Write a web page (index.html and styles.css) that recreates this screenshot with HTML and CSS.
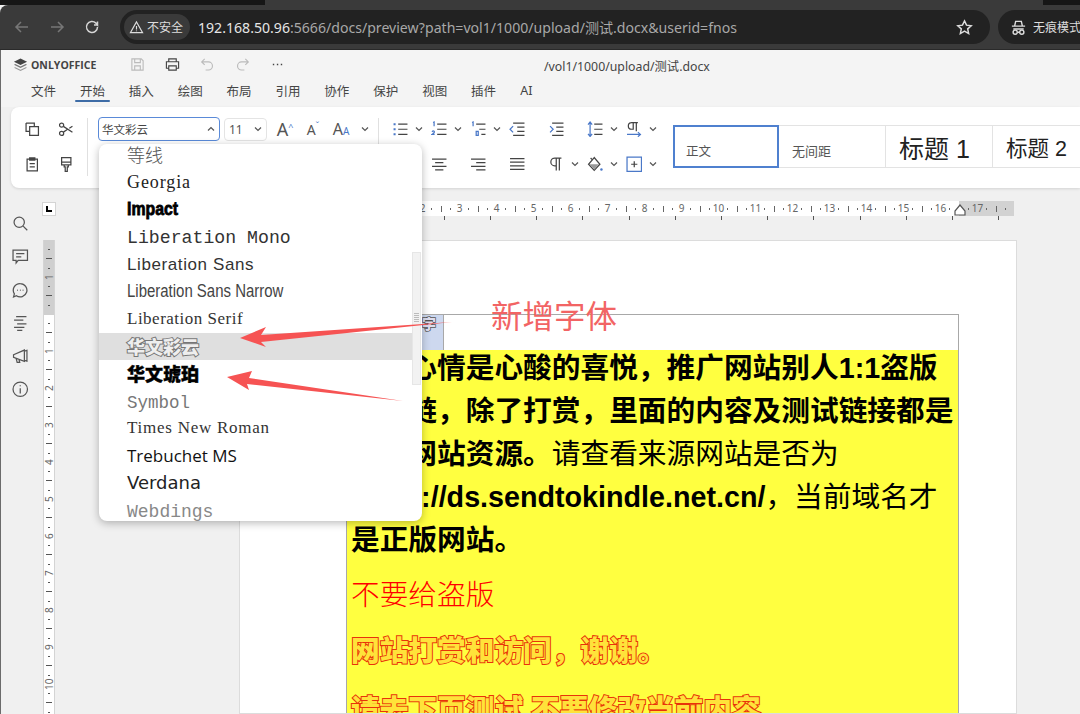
FILE: index.html
```html
<!DOCTYPE html>
<html>
<head>
<meta charset="utf-8">
<title>ONLYOFFICE</title>
<link rel="stylesheet" href="styles.css">
</head>
<body>
<!-- browser bar -->
<div class="tabstrip"><div class="tabshape"></div></div>
<div class="browser">
	<svg class="navicon dim" viewBox="0 0 16 16"><path d="M14 8H2M7 3 2 8l5 5"/></svg>
	<svg class="navicon dim" viewBox="0 0 16 16"><path d="M2 8h12M9 3l5 5-5 5"/></svg>
	<svg class="navicon" viewBox="0 0 16 16"><path d="M13.5 8a5.5 5.5 0 1 1-1.6-3.9L13.5 6V2.500M13.500 6H10"/></svg>
	<div class="urlbar">
		<div class="chip">
			<svg class="warn" viewBox="0 0 16 16"><path d="M8 2 1.500 13.500h13zM8 6.500v3.500M8 11.300v.7"/></svg>
			<span>不安全</span>
		</div>
		<div class="url"><b>192.168.50.96</b>:5666/docs/preview?path=vol1/1000/upload/测试.docx&amp;userid=fnos</div>
		<svg class="star" viewBox="0 0 16 16"><path d="m8 1.800 1.900 4 4.400.5-3.300 3 .9 4.400L8 11.500l-3.900 2.200.9-4.400-3.300-3 4.400-.5z"/></svg>
	</div>
	<div class="incognito">
		<svg class="spy" viewBox="0 0 18 18"><path d="M5 7l1-4.500h6L13 7M2 7.500h14M3.500 10.500h11"/><circle cx="5.500" cy="14" r="2.200"/><circle cx="12.500" cy="14" r="2.200"/><path d="M7.700 14h2.600"/></svg>
		<span>无痕模式</span>
	</div>
</div>

<div class="app">
	<!-- title row and menu -->
	<div class="apphead">
		<div class="titlerow">
			<div class="logo">
				<svg viewBox="0 0 16 16"><path class="lg1" d="M8 1.500 15 5 8 8.500 1 5z"/><path class="lg2" d="M2.500 7.500 1 8.300l7 3.500 7-3.500-1.500-.8L8 10.200z"/><path class="lg3" d="M2.500 10.800 1 11.500 8 15l7-3.500-1.500-.7L8 13.500z"/></svg>
				<span>ONLYOFFICE</span>
			</div>
			<div class="quick">
				<svg class="qicon faint" viewBox="0 0 16 16"><path d="M2 2h10l2 2v10H2zM5 2v4h6V2M5 14V9.500h6V14"/></svg>
				<svg class="qicon" viewBox="0 0 16 16"><path d="M4 5V2h8v3M4 12H1.500V5h13v7H12M4 9.500h8V14H4z"/></svg>
				<svg class="qicon faint" viewBox="0 0 16 16"><path d="M5 2 1.800 5.200 5 8.400M2 5.200h7a4.300 4.300 0 0 1 0 8.600H6"/></svg>
				<svg class="qicon faint" viewBox="0 0 16 16"><path d="M11 2l3.200 3.200L11 8.400M14 5.200H7a4.300 4.300 0 0 0 0 8.600h3"/></svg>
				<svg class="qicon" viewBox="0 0 16 16"><path class="dots" d="M3 8h1.500M7.300 8h1.500M11.500 8H13"/></svg>
			</div>
			<div class="filename">/vol1/1000/upload/测试.docx</div>
		</div>
		<div class="menu">
			<span>文件</span><span class="active">开始</span><span>插入</span><span>绘图</span><span>布局</span><span>引用</span><span>协作</span><span>保护</span><span>视图</span><span>插件</span><span class="ai">AI</span>
		</div>
	</div>

	<!-- toolbar -->
	<div class="toolbar">
		<div class="clip">
			<svg class="ticon" viewBox="0 0 16 16"><path d="M2 2h8v3M5.500 5.500H14V14H5.500zM2 2v8h3.500"/></svg>
			<svg class="ticon" viewBox="0 0 16 16"><circle cx="3.500" cy="4" r="2"/><circle cx="3.500" cy="12" r="2"/><path d="M5.200 5.200 14 11M5.200 10.800 9 8.300M11 7l3-2"/></svg>
			<svg class="ticon" viewBox="0 0 16 16"><path d="M3 3h10v11.500H3zM5.500 1.800h5V4h-5zM5.500 7.500h5M5.500 10.500h5"/></svg>
			<svg class="ticon" viewBox="0 0 16 16"><path d="M3.500 1.500h9v7h-9zM3.500 6h9M6 8.500v2H7v4.500h2v-4.500h1v-2"/></svg>
		</div>
		<div class="sep"></div>
		<div class="fontgroup">
			<div class="fontrow">
				<div class="fontsel">
					<span>华文彩云</span>
					<svg class="chev" viewBox="0 0 8 8"><path d="M1 5.500 4 2.500l3 3"/></svg>
				</div>
				<div class="sizesel">
					<span>11</span>
					<svg class="chev" viewBox="0 0 8 8"><path d="M1 2.500l3 3 3-3"/></svg>
				</div>
				<div class="aicon up">A<i>^</i></div>
				<div class="aicon down">A<i>ˇ</i></div>
				<div class="aicon case">A<em>A</em></div>
				<svg class="chev" viewBox="0 0 8 8"><path d="M1 2.500l3 3 3-3"/></svg>
			</div>
		</div>
		<div class="sep sep-b"></div>
		<div class="paragroup">
			<svg class="ticon" viewBox="0 0 16 16"><path d="M6 3h9M6 8h9M6 13h9"/><path class="bl" d="M1.500 2.200h2v2h-2zM1.500 7h2v2h-2zM1.500 11.800h2v2h-2z"/></svg>
			<svg class="chev" viewBox="0 0 8 8"><path d="M1 2.500l3 3 3-3"/></svg>
			<svg class="ticon" viewBox="0 0 16 16"><path d="M6 3h9M6 8h9M6 13h9"/><path class="blt" d="M2 1.500 3 1v4M1 10.500q1-1.500 2-.5t-2 3h2.500"/></svg>
			<svg class="chev" viewBox="0 0 8 8"><path d="M1 2.500l3 3 3-3"/></svg>
			<svg class="ticon" viewBox="0 0 16 16"><path d="M6 3h9M9 8h6M11 13h4"/><path class="blt" d="M2 1.500 3 1v4M6 10h2v4H6z"/></svg>
			<svg class="chev" viewBox="0 0 8 8"><path d="M1 2.500l3 3 3-3"/></svg>
			<svg class="ticon" viewBox="0 0 16 16"><path d="M4 2h11M8 6h7M8 10h7M4 14h11"/><path class="blt" d="M4 5 1 8l3 3"/></svg>
			<span></span>
			<svg class="ticon" viewBox="0 0 16 16"><path d="M4 2h11M8 6h7M8 10h7M4 14h11"/><path class="blt" d="M2 5l3 3-3 3"/></svg>
			<span></span>
			<svg class="ticon" viewBox="0 0 16 16"><path d="M7 3h8M7 8h8M7 13h8"/><path class="blt" d="M3 1v14M1 3.500 3 1l2 2.500M1 12.500 3 15l2-2.500"/></svg>
			<svg class="chev" viewBox="0 0 8 8"><path d="M1 2.500l3 3 3-3"/></svg>
			<svg class="ticon" viewBox="0 0 16 16"><path d="M9 1.500H5.500a3 3 0 0 0 0 6.500H7V1.500M10 1.500V10M11.500 1.500H5"/><path class="blt" d="M1 13h13M11.500 10.800 14 13l-2.500 2.200"/></svg>
			<svg class="chev" viewBox="0 0 8 8"><path d="M1 2.500l3 3 3-3"/></svg>

			<svg class="ticon" viewBox="0 0 16 16"><path d="M1 3h14M1 6.500h9M1 10h14M1 13.500h9"/></svg>
			<span></span>
			<svg class="ticon" viewBox="0 0 16 16"><path d="M1 3h14M4 6.500h8M1 10h14M4 13.500h8"/></svg>
			<span></span>
			<svg class="ticon" viewBox="0 0 16 16"><path d="M1 3h14M6 6.500h9M1 10h14M6 13.500h9"/></svg>
			<span></span>
			<svg class="ticon" viewBox="0 0 16 16"><path d="M1 2.500h14M1 6h14M1 9.500h14M1 13h14"/></svg>
			<span></span>
			<svg class="ticon" viewBox="0 0 16 16"><path d="M10 2H6.500a3.500 3.500 0 0 0 0 7.500H8V2M11 2v12M8 9v5M13 2H6"/></svg>
			<svg class="chev" viewBox="0 0 8 8"><path d="M1 2.500l3 3 3-3"/></svg>
			<svg class="ticon" viewBox="0 0 16 16"><path d="M7 1.500 1.500 8 7 14l5.500-6zM5 3.500 3.500 2"/><path class="fillp" d="M2.500 8h9L7 13z"/><circle class="blf" cx="14" cy="13" r="1.200"/></svg>
			<svg class="chev" viewBox="0 0 8 8"><path d="M1 2.500l3 3 3-3"/></svg>
			<svg class="ticon" viewBox="0 0 16 16"><path class="blt" d="M1 1h14v14H1z"/><path d="M8 5v6M5 8h6"/></svg>
			<svg class="chev" viewBox="0 0 8 8"><path d="M1 2.500l3 3 3-3"/></svg>
		</div>
		<div class="styles">
			<div class="style current">正文</div>
			<div class="style nospace">无间距</div>
			<div class="style h1">标题 1</div>
			<div class="style h2">标题 2</div>
		</div>
	</div>

	<!-- work area -->
	<div class="work">
		<div class="rail">
			<svg class="ricon" viewBox="0 0 16 16"><circle cx="7" cy="7" r="5"/><path d="m10.800 10.800 4 4"/></svg>
			<svg class="ricon" viewBox="0 0 16 16"><path d="M1 2h14v10H6l-2 2.500V12H1zM4 5.500h8M4 8.500h5"/></svg>
			<svg class="ricon" viewBox="0 0 16 16"><path d="M8 1.500a6.500 6.500 0 1 1-3.800 11.800L1.500 14.500l.8-3A6.500 6.500 0 0 1 8 1.500z"/><path class="dots" d="M5 8h.6M7.700 8h.6M10.400 8h.6"/></svg>
			<svg class="ricon" viewBox="0 0 16 16"><path d="M4 1.500h10M2 5h9M5 8.500h9M2 12h10M5 15h5"/></svg>
			<svg class="ricon" viewBox="0 0 16 16"><path d="M1.500 6.500 12 2v11L1.500 9zM12 3l2.500-.7v10.400L12 12M4 10l1 4h2.500l-.8-3"/></svg>
			<svg class="ricon" viewBox="0 0 16 16"><circle cx="8" cy="8" r="7"/><path d="M8 7v5M8 4v1.200"/></svg>
		</div>
		<div class="vcol">
			<div class="corner"><i></i></div>
			<div class="vruler">
				<div class="vscale">
					<span></span><span>1</span><span></span><span>1</span><span>2</span><span>3</span><span>4</span><span>5</span><span>6</span><span>7</span><span>8</span><span>9</span><span>10</span><span></span>
				</div>
			</div>
		</div>
		<div class="canvas">
			<div class="hruler">
				<div class="hscale">
					<span></span><span>2</span><span>1</span><span></span><span>1</span><span>2</span><span>3</span><span>4</span><span>5</span><span>6</span><span>7</span><span>8</span><span>9</span><span>10</span><span>11</span><span>12</span><span>13</span><span>14</span><span>15</span><span>16</span><span>17</span><span></span>
				</div>
				<svg class="marker" viewBox="0 0 12 12"><path d="M6 1 1 7v4h10V7z"/></svg>
			</div>
			<div class="tabstops"></div>
			<div class="sheet">
				<div class="table">
					<div class="tablehead"><div class="shade"><span class="cloud small">字</span></div></div>
					<div class="cell">
						<p class="line"><b>这种心情是心酸的喜悦，推广网站别人1:1盗版</b></p>
						<p class="line"><b>盗版链，除了打赏，里面的内容及测试链接都是</b></p>
						<p class="line"><b>盗版网站资源。</b>请查看来源网站是否为</p>
						<p class="line"><b>https://ds.sendtokindle.net.cn/</b>，当前域名才</p>
						<p class="line"><b>是正版网站。</b></p>
						<p class="line gap red">不要给盗版</p>
						<p class="line gap cloud">网站打赏和访问，谢谢。</p>
						<p class="line gap cloud">请去下页测试,不要修改当前内容</p>
					</div>
				</div>
			</div>
		</div>
	</div>
</div>

<!-- font dropdown, opened over the page -->
<div class="dropdown">
	<div class="fontlist">
		<div class="item f-cjk">等线</div>
		<div class="item f-georgia">Georgia</div>
		<div class="item f-impact"><span>Impact</span></div>
		<div class="item f-mono">Liberation Mono</div>
		<div class="item f-sans">Liberation Sans</div>
		<div class="item f-narrow"><span>Liberation Sans Narrow</span></div>
		<div class="item f-serif">Liberation Serif</div>
		<div class="item selected"><span class="cloudgray">华文彩云</span></div>
		<div class="item f-amber">华文琥珀</div>
		<div class="item f-symbol">Symbol</div>
		<div class="item f-times">Times New Roman</div>
		<div class="item f-treb">Trebuchet MS</div>
		<div class="item f-verdana">Verdana</div>
		<div class="item f-web">Webdings</div>
	</div>
	<div class="scrollbar"><div class="grip"></div></div>
</div>

<!-- red annotations on the screenshot -->
<svg class="arrows" viewBox="0 0 1080 714">
	<path d="M240 338 266 327 261 335 452 322 261 342 266 347z"/>
	<path d="M227 377 252 371 249 378 403 401 247 384 249 390z"/>
</svg>
<div class="note">新增字体</div>
</body>
</html>
```

FILE: styles.css
```css
*{
	box-sizing: border-box;
}
html, body{
	margin: 0;
	height: 100%;
}
body{
	width: 1080px;
	height: 714px;
	overflow: hidden;
	position: relative;
	background: #f0f0f0;
	font-family: "Noto Sans", "Liberation Sans", "Noto Sans CJK SC", sans-serif;
}
svg{
	display: block;
	fill: none;
	stroke-width: 1.2;
}

/* browser */
.tabstrip{
	height: 5px;
	background: #161616;
	padding-left: 265px;
}
.tabshape{
	width: 778px;
	height: 5px;
	background: #3a3a3a;
}
.browser{
	height: 45px;
	background: #3a3a3a;
	border-radius: 8px 0 0 0;
	display: flex;
	align-items: center;
	padding: 0 0 0 14px;
	gap: 19px;
	border-bottom: 1px solid #2a2a2a;
}
.navicon{
	width: 16px;
	height: 16px;
	stroke: #d6d6d6;
	stroke-width: 1.5;
	flex: none;
}
.navicon.dim{
	stroke: #777;
}
.urlbar{
	width: 870px;
	height: 34px;
	margin-left: 1px;
	border-radius: 17px;
	background: #222;
	display: flex;
	align-items: center;
	padding: 0 17px 0 4px;
	flex: none;
}
.chip{
	width: 66px;
	height: 26px;
	border-radius: 13px;
	background: #3a3a3a;
	display: flex;
	align-items: center;
	gap: 3px;
	padding-left: 5px;
	color: #ddd;
	font-size: 12px;
	flex: none;
}
.warn{
	width: 15px;
	height: 15px;
	stroke: #ddd;
}
.url{
	margin-left: 8px;
	font-size: 14.100px;
	color: #a8a8a8;
	white-space: nowrap;
	flex: 1;
}
.url b{
	font-weight: 400;
	color: #e6e6e6;
}
.star{
	width: 17px;
	height: 17px;
	stroke: #ddd;
	stroke-width: 1.4;
	flex: none;
}
.incognito{
	margin-left: -11px;
	flex: 1;
	height: 34px;
	background: #222;
	border-radius: 17px 0 0 17px;
	display: flex;
	align-items: center;
	padding-left: 12px;
	gap: 6px;
	color: #ddd;
	font-size: 12px;
	white-space: nowrap;
	overflow: hidden;
}
.spy{
	width: 17px;
	height: 17px;
	stroke: #ddd;
	stroke-width: 1.5;
	flex: none;
}

/* app header */
.app{
	border-left: 1px solid #6b6b6b;
	height: 664px;
	display: flex;
	flex-direction: column;
	overflow: hidden;
}
.apphead{
	height: 57px;
	background: #f4f4f4;
	flex: none;
}
.titlerow{
	height: 29px;
	display: flex;
	align-items: center;
	padding-left: 12px;
}
.logo{
	width: 117px;
	display: flex;
	align-items: center;
	gap: 3px;
	font-size: 10.5px;
	font-weight: 700;
	color: #444;
	font-family: "Open Sans", "Liberation Sans", sans-serif;
}
.logo svg{
	width: 15px;
	height: 15px;
}
.lg1{
	fill: #444;
}
.lg2{
	fill: #777;
}
.lg3{
	fill: #999;
}
.quick{
	width: 166px;
	display: flex;
	gap: 20px;
}
.qicon{
	width: 15px;
	height: 15px;
	stroke: #444;
	flex: none;
}
.qicon.faint{
	stroke: #bbb;
}
.dots{
	stroke: #444;
	stroke-width: 1.6;
}
.filename{
	margin-left: 248px;
	margin-top: 3px;
	font-size: 12.3px;
	color: #444;
	white-space: nowrap;
}
.menu{
	display: flex;
	padding-left: 30px;
	font-size: 12.5px;
	color: #444;
	height: 23px;
	align-items: center;
}
.menu span{
	width: 25px;
	margin-right: 23.9px;
	white-space: nowrap;
	position: relative;
	text-align: center;
}
.menu .active::after{
	content: "";
	position: absolute;
	left: -5px;
	right: -5px;
	bottom: -2px;
	height: 2px;
	border-radius: 1px;
	background: #3e6ca6;
}
.menu .ai{
	margin-left: -6px;
}

/* toolbar */
.toolbar{
	height: 81px;
	margin: 0 0 0 10px;
	padding: 11px 0 0 4px;
	background: #fff;
	border-radius: 8px 0 0 8px;
	box-shadow: 0 1px 3px rgba(0,0,0,.12);
	display: flex;
	overflow: hidden;
	flex: none;
}
.clip{
	width: 68px;
	display: grid;
	grid-template-columns: 34px 34px;
	grid-template-rows: 22px 22px;
	row-gap: 13px;
	justify-items: center;
	align-items: center;
	flex: none;
}
.ticon{
	width: 16.500px;
	height: 16.500px;
	stroke: #444;
	flex: none;
}
.ticon .bl, .blf{
	fill: #4a78c8;
	stroke: none;
}
.ticon .blt{
	stroke: #4a78c8;
}
.fillp{
	fill: #999;
	stroke: none;
}
.sep{
	width: 1px;
	height: 58px;
	background: #e0e0e0;
	margin: 0 10px 0 4px;
	flex: none;
}
.sep-b{
	margin: 0 11px 0 0;
}
.fontgroup{
	width: 280px;
	flex: none;
}
.fontrow{
	display: flex;
	align-items: center;
	height: 22px;
}
.fontsel{
	width: 122px;
	height: 24px;
	margin-top: -1px;
	border: 1.5px solid #5a8ad8;
	border-radius: 4px;
	display: flex;
	align-items: center;
	justify-content: space-between;
	padding: 0 4px 0 3px;
	font-size: 11.5px;
	color: #444;
	flex: none;
}
.sizesel{
	width: 43px;
	height: 23px;
	margin-left: 4px;
	border: 1px solid #e4e4e4;
	border-radius: 4px;
	display: flex;
	align-items: center;
	justify-content: space-between;
	padding: 0 4px;
	font-size: 12px;
	color: #555;
	flex: none;
}
.chev{
	width: 8px;
	height: 8px;
	stroke: #555;
	stroke-width: 1.2;
	justify-self: center;
	align-self: center;
	flex: none;
}
.aicon{
	color: #555;
	font-size: 18px;
	width: 28px;
	text-align: center;
	white-space: nowrap;
	flex: none;
}
.aicon i{
	font-style: normal;
	font-size: 9px;
	color: #4a78c8;
	vertical-align: 6px;
}
.aicon.down{
	font-size: 14px;
}
.aicon.up{
	margin-left: 4px;
}
.aicon.case{
	width: 28px;
	margin-right: 6px;
	font-size: 16px;
}
.aicon em{
	font-style: normal;
	font-size: 10px;
	color: #4a78c8;
}
.paragroup{
	display: grid;
	grid-template-columns: repeat(14, 19.5px);
	grid-template-rows: 22px 22px;
	row-gap: 13px;
	justify-items: center;
	align-items: center;
	flex: none;
}
.styles{
	display: flex;
	height: 43px;
	margin: 7px 0 0 10px;
	flex: none;
}
.style{
	width: 107px;
	height: 43px;
	border: solid #e3e3e3;
	border-width: 1px 1px 1px 0;
	padding-left: 13px;
	display: flex;
	align-items: center;
	white-space: nowrap;
	color: #333;
	flex: none;
	font-family: "Liberation Sans", "Noto Sans CJK SC", sans-serif;
}
.style.current{
	width: 106px;
	border: 2px solid #4f80cf;
	padding: 8px 0 0 11px;
	font-size: 12.5px;
	color: #555;
}
.style.nospace{
	padding-top: 8px;
	font-size: 13px;
	color: #555;
}
.style.h1{
	font-size: 25px;
	color: #222;
}
.style.h2{
	font-size: 21.500px;
	color: #222;
}

/* work area */
.work{
	flex: 1;
	display: flex;
	min-height: 0;
	overflow: hidden;
}
.rail{
	width: 43px;
	padding-top: 27px;
	display: flex;
	flex-direction: column;
	align-items: center;
	gap: 16.800px;
	flex: none;
	margin-left: -2px;
}
.ricon{
	width: 16.500px;
	height: 16.500px;
	stroke: #555;
	flex: none;
}
.vcol{
	width: 14px;
	flex: none;
}
.corner{
	width: 14px;
	height: 14px;
	margin-top: 14px;
	background: #fff;
	border: 1px solid #d4d4d4;
	padding: 3px 0 0 3px;
}
.corner i{
	display: block;
	width: 6px;
	height: 6px;
	border: solid #000;
	border-width: 0 0 2px 2px;
}
.vruler{
	width: 12px;
	margin: 24px 0 0 1px;
	height: 474px;
	overflow: hidden;
	background: linear-gradient(#cfcfcf 75px, #fff 75px);
	border-right: 1px solid #d4d4d4;
	border-left: 1px solid #d4d4d4;
}
.vscale{
	margin-top: -18.500px;
	display: flex;
	flex-direction: column;
}
.vscale span{
	height: 37px;
	flex: none;
	font-size: 10px;
	line-height: 10px;
	color: #666;
	display: flex;
	align-items: center;
	justify-content: center;
	background:
		linear-gradient(#555,#555) 50% 0/6px 1px no-repeat,
		linear-gradient(#555,#555) 50% 25%/2px 1px no-repeat,
		linear-gradient(#555,#555) 50% 75%/2px 1px no-repeat;
	writing-mode: vertical-rl;
	transform: rotate(180deg);
}
.canvas{
	flex: 1;
	min-width: 0;
	padding-left: 183px;
}
.hruler{
	position: relative;
	width: 775px;
	height: 15px;
	margin-top: 13px;
	overflow: hidden;
	background: linear-gradient(90deg, #cfcfcf 109px, #fff 109px, #fff 720px, #d2d2d2 720px);
}
.hscale{
	display: flex;
	margin-left: -20px;
}
.hscale span{
	width: 37px;
	height: 15px;
	flex: none;
	font-size: 10px;
	line-height: 15px;
	color: #666;
	text-align: center;
	background:
		linear-gradient(#666,#666) 0 50%/1px 6px no-repeat,
		linear-gradient(#666,#666) 25% 50%/1px 2px no-repeat,
		linear-gradient(#666,#666) 75% 50%/1px 2px no-repeat;
}
.marker{
	position: absolute;
	left: 715px;
	top: 3px;
	width: 12px;
	height: 12px;
	stroke: #555;
	fill: #fff;
}
.tabstops{
	width: 775px;
	height: 4px;
	background: repeating-linear-gradient(90deg, #555 0 1px, transparent 1px 46.200px) 20px 0;
}
.sheet{
	width: 778px;
	height: 474px;
	overflow: hidden;
	margin-top: 20px;
	background: #fff;
	border: 1px solid #dcdcdc;
	padding: 73px 0 0 106px;
}
.table{
	width: 613px;
	height: 400px;
	overflow: hidden;
	border: solid #a8a8a8;
	border-width: 1px 1px 0 1px;
	font-family: "Liberation Sans", "Noto Sans CJK SC", sans-serif;
}
.tablehead{
	height: 35px;
}
.shade{
	width: 97px;
	height: 35px;
	background: #cdd8ef;
	border-right: 1px solid #a8a8a8;
	padding: 0 7px 0 0;
	text-align: right;
}
.cell{
	height: 370px;
	background: #ffff40;
	padding-left: 4px;
	display: flex;
	flex-direction: column;
	gap: 7px;
	color: #000;
}
.line{
	margin: 0;
	height: 36px;
	line-height: 36px;
	font-size: 28.700px;
	white-space: nowrap;
	flex: none;
}
.line b{
	font-weight: 700;
}
.gap{
	margin-top: 13px;
}
.line:nth-child(6){
	margin-top: 12px;
}
.line:nth-child(8){
	margin-top: 16px;
}
.red{
	color: #f00;
	font-weight: 300;
}
.cloud{
	color: #ffe23a;
	font-weight: 900;
	-webkit-text-stroke: 2px #e8330a;
	paint-order: stroke fill;
}
.cloud.small{
	font-size: 14px;
	line-height: 18px;
	color: #dde;
	-webkit-text-stroke: 1.500px #555;
}

/* font list */
.dropdown{
	position: absolute;
	left: 99px;
	top: 144px;
	width: 323px;
	height: 377px;
	background: #fff;
	border-radius: 8px;
	box-shadow: 0 2px 8px rgba(0,0,0,.28);
	overflow: hidden;
}
.fontlist{
	margin-top: -2.500px;
	padding-right: 10px;
}
.item{
	height: 27.300px;
	line-height: 27.300px;
	padding-left: 28px;
	font-size: 17px;
	color: #222;
	white-space: nowrap;
}
.item span{
	display: inline-block;
}
.selected{
	background: #dfdfdf;
}
.cloudgray{
	font-family: "Noto Sans CJK SC", sans-serif;
	font-weight: 900;
	font-size: 18px;
	color: #eee;
	-webkit-text-stroke: 2px #777;
	paint-order: stroke fill;
}
.f-cjk{
	font-family: "Noto Sans CJK SC", sans-serif;
	font-weight: 300;
	font-size: 18px;
	line-height: 24px;
	color: #555;
}
.f-georgia{
	font-family: "Liberation Serif", serif;
	font-size: 18px;
	letter-spacing: .9px;
}
.f-impact{
	font-family: "Liberation Sans", sans-serif;
	font-weight: 700;
	font-size: 18px;
	color: #000;
	-webkit-text-stroke: .8px #000;
}
.f-impact span{
	transform: scaleX(.88);
	transform-origin: 0 50%;
}
.f-mono{
	font-family: "Liberation Mono", monospace;
	font-size: 18.200px;
	padding-top: 2px;
	color: #333;
}
.f-sans{
	font-family: "Liberation Sans", sans-serif;
	font-size: 17px;
	letter-spacing: .6px;
	color: #333;
}
.f-narrow{
	font-family: "Liberation Sans", sans-serif;
	font-size: 17.500px;
	color: #444;
}
.f-narrow span{
	transform: scaleX(.855);
	transform-origin: 0 50%;
}
.f-serif{
	font-family: "Liberation Serif", serif;
	font-size: 17px;
	letter-spacing: .5px;
	color: #333;
}
.f-amber{
	font-family: "Noto Sans CJK SC", sans-serif;
	font-weight: 900;
	font-size: 18px;
	color: #000;
	-webkit-text-stroke: .4px #000;
}
.f-symbol{
	font-family: "Liberation Mono", monospace;
	font-size: 17.500px;
	padding-top: 3px;
	color: #777;
}
.f-times{
	font-family: "Liberation Serif", serif;
	font-size: 17px;
	letter-spacing: .75px;
	color: #333;
}
.f-treb{
	font-family: "Open Sans", sans-serif;
	font-size: 17px;
	font-weight: 500;
	color: #111;
}
.f-verdana{
	font-family: "DejaVu Sans", sans-serif;
	font-size: 18px;
	color: #222;
}
.f-web{
	font-family: "Liberation Mono", monospace;
	font-size: 18px;
	padding-top: 3px;
	color: #888;
}
.scrollbar{
	position: absolute;
	left: 313px;
	top: 108px;
	width: 9px;
	height: 133px;
	background: #f2f2f2;
	border: 1px solid #e6e6e6;
	padding-top: 60px;
}
.grip{
	height: 9px;
	margin: 0 1px;
	background: repeating-linear-gradient(#bbb 0 1px, transparent 1px 2px);
}

/* annotations */
.arrows{
	position: absolute;
	left: 0;
	top: 0;
	width: 1080px;
	height: 714px;
	pointer-events: none;
}
.arrows path{
	fill: #f65353;
}
.note{
	position: absolute;
	left: 491px;
	top: 292px;
	font-size: 31.500px;
	line-height: 44px;
	color: #f26464;
	font-family: "Noto Sans CJK SC", sans-serif;
	font-weight: 400;
	white-space: nowrap;
}
```
